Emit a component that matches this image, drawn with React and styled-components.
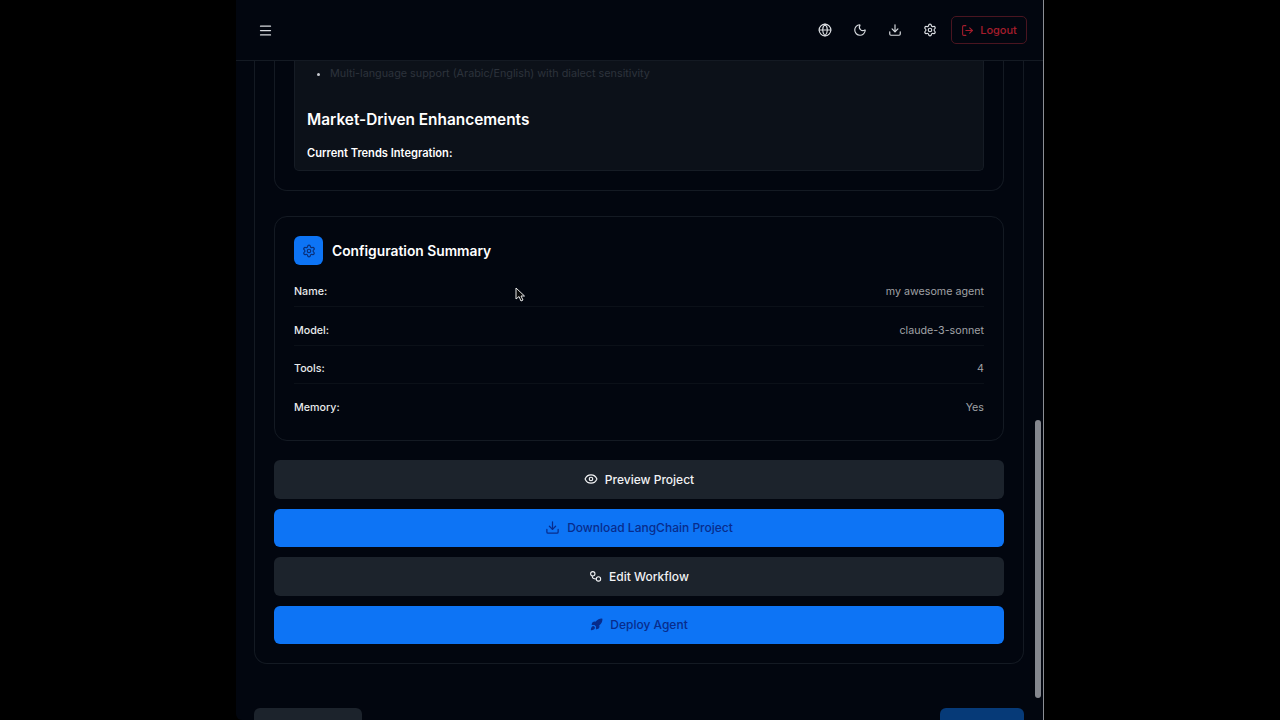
import React from 'react';
import styled, { createGlobalStyle } from 'styled-components';
import { Menu, Globe, Moon, Download, Settings, LogOut, Eye, Rocket } from 'lucide-react';

const GlobalStyle = createGlobalStyle`
  html, body {
    margin: 0;
    height: 100%;
    background: #000;
    overflow: hidden;
  }
  * { box-sizing: border-box; }
`;

const Stage = styled.div`
  width: 1280px;
  height: 720px;
  display: flex;
  justify-content: center;
  background: #000;
  font-family: Inter, "Liberation Sans", sans-serif;
`;

const Window = styled.div`
  position: relative;
  width: 808px;
  height: 720px;
  display: flex;
  flex-direction: column;
  background: #02060f;
  border-right: 1px solid #8b8e94;
  border-bottom-left-radius: 6px;
  overflow: hidden;
`;

const Header = styled.header`
  height: 61px;
  flex: none;
  display: flex;
  align-items: center;
  justify-content: space-between;
  padding: 0 16px 0 22px;
  border-bottom: 1px solid #141a23;
`;

const HeaderActions = styled.div`
  display: flex;
  align-items: center;
  gap: 14px;
`;

const IconGroup = styled.div`
  display: flex;
  align-items: center;
  gap: 21px;
`;

const IconBtn = styled.span`
  display: flex;
  color: #d9dce0;
`;

const LogoutBtn = styled.div`
  display: flex;
  align-items: center;
  gap: 6px;
  height: 28px;
  width: 76px;
  justify-content: center;
  border: 1px solid #4a1520;
  border-radius: 5px;
  color: #a51d2c;
  font-size: 11px;
  font-weight: 500;
`;

const Main = styled.main`
  flex: 1;
  min-height: 0;
  overflow: hidden;
  padding: 0 19px 0 18px;
`;

const OuterCard = styled.div`
  display: flex;
  flex-direction: column;
  gap: 25px;
  padding: 0 19px 19px;
  border: 1px solid #141a23;
  border-top: 0;
  border-radius: 0 0 13px 13px;
`;

const OuterFooter = styled.div`
  display: flex;
  justify-content: space-between;
  margin-top: 44px;
`;

const GhostBtn = styled.div`
  width: ${p => (p.$primary ? '84px' : '108px')};
  height: 30px;
  border-radius: 6px;
  background: ${p => (p.$primary ? '#063a78' : '#1c232c')};
`;

const PreviewCard = styled.section`
  padding: 0 19px 19px;
  border: 1px solid #141a23;
  border-top: 0;
  border-radius: 0 0 13px 13px;
`;

const PreviewBox = styled.div`
  padding: 4px 12px 8px;
  background: #0c1119;
  border: 1px solid #161c25;
  border-top: 0;
  border-radius: 0 0 5px 5px;
`;

const BulletList = styled.ul`
  margin: 0;
  padding-left: 23px;
  color: #c9ccd1;
  font-size: 10.8px;
  line-height: 18px;
`;

const FadedText = styled.span`
  color: #2d333c;
`;

const SectionHeading = styled.h3`
  margin: 27px 0 0;
  color: #fff;
  font-size: 15.4px;
  font-weight: 600;
  line-height: 20px;
`;

const SubHeading = styled.p`
  margin: 14px 0 0;
  color: #fff;
  font-size: 11.1px;
  font-weight: 600;
  line-height: 18px;
`;

const SummaryCard = styled.section`
  padding: 19px 19px 17px;
  border: 1px solid #141a23;
  border-radius: 13px;
`;

const SummaryTitleRow = styled.div`
  display: flex;
  align-items: center;
  gap: 9px;
  margin-bottom: 12px;
`;

const IconTile = styled.div`
  width: 29px;
  height: 29px;
  display: flex;
  align-items: center;
  justify-content: center;
  border-radius: 6px;
  background: #0d74f5;
  color: #0a2f78;
`;

const SummaryTitle = styled.h2`
  margin: 0;
  color: #fff;
  font-size: 13.8px;
  font-weight: 600;
`;

const SummaryRow = styled.div`
  display: flex;
  align-items: center;
  justify-content: space-between;
  height: 30px;
  margin-bottom: ${p => (p.$last ? '0' : '8.6px')};
  font-size: 10.7px;
  border-bottom: ${p => (p.$last ? '0' : '1px solid #0b1018')};
`;

const RowLabel = styled.span`
  color: #e8eaec;
  font-weight: 500;
`;

const RowValue = styled.span`
  color: #a0a2a6;
`;

const ActionStack = styled.div`
  display: flex;
  flex-direction: column;
  gap: 10px;
  margin-top: -5.7px;
`;

const ActionBtn = styled.div`
  height: 38.5px;
  display: flex;
  align-items: center;
  justify-content: center;
  gap: 7px;
  border-radius: 6px;
  font-size: 12px;
  font-weight: 500;
  background: ${p => (p.$primary ? '#0d74f5' : '#1c232c')};
  color: ${p => (p.$primary ? '#082c8c' : '#f2f3f5')};
`;

const ScrollThumb = styled.div`
  position: absolute;
  top: 420px;
  right: 2px;
  width: 6px;
  height: 278px;
  border-radius: 3px;
  background: #84878e;
`;

const Cursor = styled.svg`
  position: absolute;
  left: 279px;
  top: 287px;
`;

// two linked nodes, top-left to bottom-right
const WorkflowIcon = ({ size }) => (
  <svg width={size} height={size} viewBox="0 0 24 24" fill="none" stroke="currentColor" strokeWidth="2" strokeLinecap="round">
    <circle cx="7" cy="7" r="4" />
    <circle cx="17.5" cy="16.5" r="4" />
    <path d="M6 11.5c0 3.5 2 5 7.5 5" />
  </svg>
);

const FilledRocket = ({ size }) => <Rocket size={size} fill="currentColor" />;

const rows = [
  { label: 'Name:', value: 'my awesome agent' },
  { label: 'Model:', value: 'claude-3-sonnet' },
  { label: 'Tools:', value: '4' },
  { label: 'Memory:', value: 'Yes' },
];

const actions = [
  { label: 'Preview Project', icon: Eye, size: 14 },
  { label: 'Download LangChain Project', icon: Download, size: 15, primary: true },
  { label: 'Edit Workflow', icon: WorkflowIcon, size: 13 },
  { label: 'Deploy Agent', icon: FilledRocket, size: 13, primary: true },
];

export default function App() {
  return (
    <Stage>
      <GlobalStyle />
      <Window>
        <Header>
          <IconBtn><Menu size={15} /></IconBtn>
          <HeaderActions>
            <IconGroup>
              <IconBtn><Globe size={14} /></IconBtn>
              <IconBtn><Moon size={14} /></IconBtn>
              <IconBtn><Download size={14} /></IconBtn>
              <IconBtn><Settings size={14} /></IconBtn>
            </IconGroup>
            <LogoutBtn><LogOut size={13} />Logout</LogoutBtn>
          </HeaderActions>
        </Header>
        <Main>
          <OuterCard>
            <PreviewCard>
              <PreviewBox>
                <BulletList>
                  <li><FadedText>Multi-language support (Arabic/English) with dialect sensitivity</FadedText></li>
                </BulletList>
                <SectionHeading>Market-Driven Enhancements</SectionHeading>
                <SubHeading>Current Trends Integration:</SubHeading>
              </PreviewBox>
            </PreviewCard>
            <SummaryCard>
              <SummaryTitleRow>
                <IconTile><Settings size={14} /></IconTile>
                <SummaryTitle>Configuration Summary</SummaryTitle>
              </SummaryTitleRow>
              {rows.map((r, i) => (
                <SummaryRow key={r.label} $last={i === rows.length - 1}>
                  <RowLabel>{r.label}</RowLabel>
                  <RowValue>{r.value}</RowValue>
                </SummaryRow>
              ))}
            </SummaryCard>
            <ActionStack>
              {actions.map(a => (
                <ActionBtn key={a.label} $primary={a.primary}>
                  <a.icon size={a.size} />
                  {a.label}
                </ActionBtn>
              ))}
            </ActionStack>
          </OuterCard>
          <OuterFooter>
            <GhostBtn />
            <GhostBtn $primary />
          </OuterFooter>
        </Main>
        <ScrollThumb />
        <Cursor width="10" height="15" viewBox="0 0 10 15">
          <path d="M1 1v11l3-2.5 2 4.5 2-1-2-4h3.5z" fill="#0a0a0a" stroke="#e8e8e8" strokeWidth="1" />
        </Cursor>
      </Window>
    </Stage>
  );
}
